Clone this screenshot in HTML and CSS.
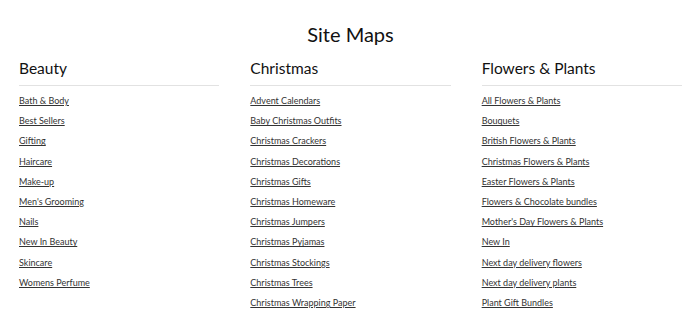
FILE: index.html
```html
<!doctype html>
<html lang="en">

<head>
    <meta charset="UTF-8">
    <title>Site Maps</title>
    <link rel="stylesheet" href="styles.css">
</head>

<body>
    <main class="sitemap">
        <h1 class="sitemap-title">Site Maps</h1>
        <div class="sitemap-columns">
            <section class="sitemap-group">
                <h2 class="group-title">Beauty</h2>
                <ul class="group-links">
                    <li><a href="#">Bath &amp; Body</a></li>
                    <li><a href="#">Best Sellers</a></li>
                    <li><a href="#">Gifting</a></li>
                    <li><a href="#">Haircare</a></li>
                    <li><a href="#">Make-up</a></li>
                    <li><a href="#">Men's Grooming</a></li>
                    <li><a href="#">Nails</a></li>
                    <li><a href="#">New In Beauty</a></li>
                    <li><a href="#">Skincare</a></li>
                    <li><a href="#">Womens Perfume</a></li>
                </ul>
            </section>
            <section class="sitemap-group">
                <h2 class="group-title">Christmas</h2>
                <ul class="group-links">
                    <li><a href="#">Advent Calendars</a></li>
                    <li><a href="#">Baby Christmas Outfits</a></li>
                    <li><a href="#">Christmas Crackers</a></li>
                    <li><a href="#">Christmas Decorations</a></li>
                    <li><a href="#">Christmas Gifts</a></li>
                    <li><a href="#">Christmas Homeware</a></li>
                    <li><a href="#">Christmas Jumpers</a></li>
                    <li><a href="#">Christmas Pyjamas</a></li>
                    <li><a href="#">Christmas Stockings</a></li>
                    <li><a href="#">Christmas Trees</a></li>
                    <li><a href="#">Christmas Wrapping Paper</a></li>
                </ul>
            </section>
            <section class="sitemap-group">
                <h2 class="group-title">Flowers &amp; Plants</h2>
                <ul class="group-links">
                    <li><a href="#">All Flowers &amp; Plants</a></li>
                    <li><a href="#">Bouquets</a></li>
                    <li><a href="#">British Flowers &amp; Plants</a></li>
                    <li><a href="#">Christmas Flowers &amp; Plants</a></li>
                    <li><a href="#">Easter Flowers &amp; Plants</a></li>
                    <li><a href="#">Flowers &amp; Chocolate bundles</a></li>
                    <li><a href="#">Mother's Day Flowers &amp; Plants</a></li>
                    <li><a href="#">New In</a></li>
                    <li><a href="#">Next day delivery flowers</a></li>
                    <li><a href="#">Next day delivery plants</a></li>
                    <li><a href="#">Plant Gift Bundles</a></li>
                </ul>
            </section>
        </div>
    </main>
</body>

</html>
```

FILE: styles.css
```css
*,
*:after,
*:before {
    box-sizing: border-box;
    padding: 0;
    margin: 0;
}

body {
    font-family: Lato, "Open Sans", sans-serif;
    color: #222;
    background: #fff;
}

ul {
    list-style: none;
}

.sitemap {
    padding: 21px 18px 0 19px;
}

.sitemap-title {
    font-size: 20px;
    font-weight: normal;
    line-height: 26px;
    text-align: center;
    color: #111;
}

.sitemap-columns {
    display: grid;
    grid-template-columns: repeat(3, 1fr);
    column-gap: 31px;
    margin-top: 10px;
}

.group-title {
    font-size: 15.5px;
    font-weight: normal;
    line-height: 22px;
    color: #111;
    padding-bottom: 6px;
    border-bottom: 1px solid #e2e2e2;
}

.group-links {
    padding-top: 5px;
}

.group-links li {
    height: 20.2px;
    line-height: 13px;
}

.group-links a {
    font-size: 9px;
    color: #333;
    text-decoration: underline;
    text-underline-offset: 1px;
}
```
